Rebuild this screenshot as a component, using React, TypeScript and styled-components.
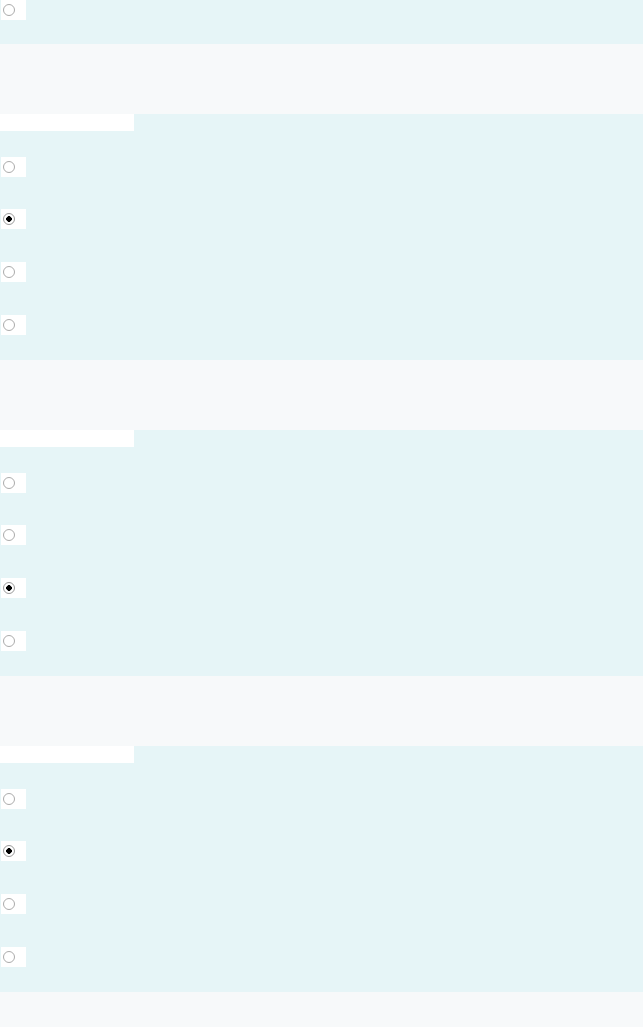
import React from "react";
import styled, { createGlobalStyle } from "styled-components";

const GlobalStyle = createGlobalStyle`
  html, body {
    margin: 0;
    padding: 0;
    background-color: #e6f5f7;
    font-family: "Liberation Sans", Arial, sans-serif;
  }
`;

const Page = styled.div`
  display: flex;
  flex-direction: column;
  width: 100%;
`;

const TopBlock = styled.div`
  height: 44px;
  box-sizing: border-box;
  background-color: #e6f5f7;
`;

const Header = styled.div`
  height: 70px;
  background-color: #f7f9fa;
`;

const Body = styled.div`
  display: flex;
  flex-direction: column;
  align-items: flex-start;
  height: 246px;
  box-sizing: border-box;
  background-color: #e6f5f7;
`;

const Bar = styled.div`
  width: 134px;
  height: 17px;
  background-color: #ffffff;
  margin-bottom: 25.6px;
`;

const Options = styled.div`
  display: flex;
  flex-direction: column;
  gap: 32.7px;
`;

const RadioBox = styled.label`
  display: flex;
  align-items: flex-start;
  width: 25px;
  height: 20px;
  margin-left: 1px;
  box-sizing: border-box;
  background-color: #ffffff;
`;

const Radio = styled.input.attrs({ type: "radio" })`
  appearance: none;
  -webkit-appearance: none;
  width: 12px;
  height: 12px;
  margin: 4px 0 0 2px;
  box-sizing: border-box;
  border: 1px solid #ababab;
  border-radius: 50%;
  background-color: #ffffff;

  &:checked {
    border-color: #9a9a9a;
    background: radial-gradient(circle, #000000 0 2.6px, #ffffff 3px);
  }
`;

type Group = { name: string; checked: number };

const groups: Group[] = [
  { name: "q1", checked: 1 },
  { name: "q2", checked: 2 },
  { name: "q3", checked: 1 },
];

const Section: React.FC<Group> = ({ name, checked }) => (
  <>
    <Header />
    <Body>
      <Bar />
      <Options>
        {[0, 1, 2, 3].map((i) => (
          <RadioBox key={i}>
            <Radio name={name} defaultChecked={i === checked} />
          </RadioBox>
        ))}
      </Options>
    </Body>
  </>
);

const App: React.FC = () => {
  return (
    <Page>
      <GlobalStyle />
      <TopBlock>
        <RadioBox>
          <Radio name="q0" />
        </RadioBox>
      </TopBlock>
      {groups.map((g) => (
        <Section key={g.name} {...g} />
      ))}
      <Header />
    </Page>
  );
};

export default App;
